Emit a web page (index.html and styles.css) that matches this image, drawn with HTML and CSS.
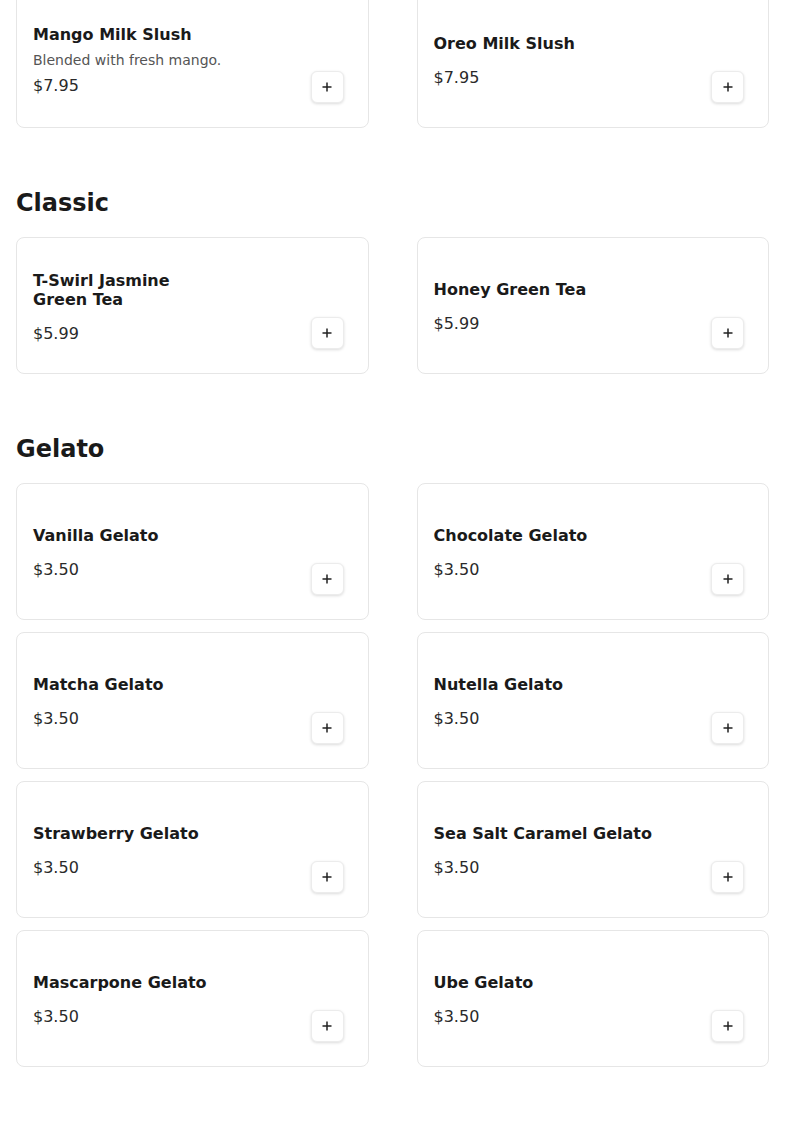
FILE: index.html
```html
<!DOCTYPE html>
<html lang="en">
<head>
<meta charset="utf-8">
<title>Menu</title>
<link rel="stylesheet" href="styles.css">
</head>
<body>
<main class="menu">
  <section class="section section-first">
    <div class="grid">
      <div class="card">
        <div class="info">
          <div class="name">Mango Milk Slush</div>
          <div class="desc">Blended with fresh mango.</div>
          <div class="price">$7.95</div>
        </div>
        <button class="add" aria-label="Add"><svg viewBox="0 0 10 10" width="10" height="10"><path d="M5 0.5v9M0.5 5h9" stroke="#222" stroke-width="1.5"/></svg></button>
      </div>
      <div class="card">
        <div class="info">
          <div class="name">Oreo Milk Slush</div>
          <div class="price">$7.95</div>
        </div>
        <button class="add" aria-label="Add"><svg viewBox="0 0 10 10" width="10" height="10"><path d="M5 0.5v9M0.5 5h9" stroke="#222" stroke-width="1.5"/></svg></button>
      </div>
    </div>
  </section>

  <section class="section">
    <h2 class="section-title">Classic</h2>
    <div class="grid">
      <div class="card">
        <div class="info">
          <div class="name">T-Swirl Jasmine<br>Green Tea</div>
          <div class="price">$5.99</div>
        </div>
        <button class="add" aria-label="Add"><svg viewBox="0 0 10 10" width="10" height="10"><path d="M5 0.5v9M0.5 5h9" stroke="#222" stroke-width="1.5"/></svg></button>
      </div>
      <div class="card">
        <div class="info">
          <div class="name">Honey Green Tea</div>
          <div class="price">$5.99</div>
        </div>
        <button class="add" aria-label="Add"><svg viewBox="0 0 10 10" width="10" height="10"><path d="M5 0.5v9M0.5 5h9" stroke="#222" stroke-width="1.5"/></svg></button>
      </div>
    </div>
  </section>

  <section class="section">
    <h2 class="section-title">Gelato</h2>
    <div class="grid">
      <div class="card">
        <div class="info"><div class="name">Vanilla Gelato</div><div class="price">$3.50</div></div>
        <button class="add" aria-label="Add"><svg viewBox="0 0 10 10" width="10" height="10"><path d="M5 0.5v9M0.5 5h9" stroke="#222" stroke-width="1.5"/></svg></button>
      </div>
      <div class="card">
        <div class="info"><div class="name">Chocolate Gelato</div><div class="price">$3.50</div></div>
        <button class="add" aria-label="Add"><svg viewBox="0 0 10 10" width="10" height="10"><path d="M5 0.5v9M0.5 5h9" stroke="#222" stroke-width="1.5"/></svg></button>
      </div>
      <div class="card">
        <div class="info"><div class="name">Matcha Gelato</div><div class="price">$3.50</div></div>
        <button class="add" aria-label="Add"><svg viewBox="0 0 10 10" width="10" height="10"><path d="M5 0.5v9M0.5 5h9" stroke="#222" stroke-width="1.5"/></svg></button>
      </div>
      <div class="card">
        <div class="info"><div class="name">Nutella Gelato</div><div class="price">$3.50</div></div>
        <button class="add" aria-label="Add"><svg viewBox="0 0 10 10" width="10" height="10"><path d="M5 0.5v9M0.5 5h9" stroke="#222" stroke-width="1.5"/></svg></button>
      </div>
      <div class="card">
        <div class="info"><div class="name">Strawberry Gelato</div><div class="price">$3.50</div></div>
        <button class="add" aria-label="Add"><svg viewBox="0 0 10 10" width="10" height="10"><path d="M5 0.5v9M0.5 5h9" stroke="#222" stroke-width="1.5"/></svg></button>
      </div>
      <div class="card">
        <div class="info"><div class="name">Sea Salt Caramel Gelato</div><div class="price">$3.50</div></div>
        <button class="add" aria-label="Add"><svg viewBox="0 0 10 10" width="10" height="10"><path d="M5 0.5v9M0.5 5h9" stroke="#222" stroke-width="1.5"/></svg></button>
      </div>
      <div class="card">
        <div class="info"><div class="name">Mascarpone Gelato</div><div class="price">$3.50</div></div>
        <button class="add" aria-label="Add"><svg viewBox="0 0 10 10" width="10" height="10"><path d="M5 0.5v9M0.5 5h9" stroke="#222" stroke-width="1.5"/></svg></button>
      </div>
      <div class="card">
        <div class="info"><div class="name">Ube Gelato</div><div class="price">$3.50</div></div>
        <button class="add" aria-label="Add"><svg viewBox="0 0 10 10" width="10" height="10"><path d="M5 0.5v9M0.5 5h9" stroke="#222" stroke-width="1.5"/></svg></button>
      </div>
    </div>
  </section>
</main>
</body>
</html>
```
FILE: styles.css
```css
* { box-sizing: border-box; }

body {
  margin: 0;
  background: #ffffff;
  font-family: "DejaVu Sans", Verdana, sans-serif;
  color: #1a1a1a;
}

.menu {
  padding: 0 16px 40px;
}

.section-first {
  margin-top: -9px;
}

.section-title {
  margin: 61px 0 20px;
  font-size: 24px;
  line-height: 28px;
  font-weight: 700;
  color: #1a1a1a;
}

.grid {
  display: grid;
  grid-template-columns: 1fr 1fr;
  column-gap: 48px;
  row-gap: 12px;
}

.card {
  display: flex;
  align-items: center;
  height: 137px;
  padding: 16px;
  border: 1px solid #e6e6e6;
  border-radius: 8px;
  background: #fff;
}

.info {
  flex: 1;
  display: flex;
  flex-direction: column;
}

.info:not(:has(.desc)) {
  padding-top: 2px;
}

.name {
  font-size: 16px;
  line-height: 19px;
  font-weight: 700;
  color: #1a1a1a;
  margin-bottom: 8px;
}

.desc {
  font-size: 14px;
  line-height: 17px;
  color: #555555;
}

.price {
  margin-top: 7px;
  font-size: 16px;
  line-height: 19px;
  color: #2a2a2a;
}

.add {
  align-self: flex-end;
  flex: none;
  width: 33px;
  height: 32px;
  margin: 0 8px 8px 0;
  padding: 0;
  display: flex;
  align-items: center;
  justify-content: center;
  background: #fff;
  border: 1px solid #ececec;
  border-radius: 6px;
  box-shadow: 0 1px 3px rgba(0, 0, 0, 0.14);
}
```
